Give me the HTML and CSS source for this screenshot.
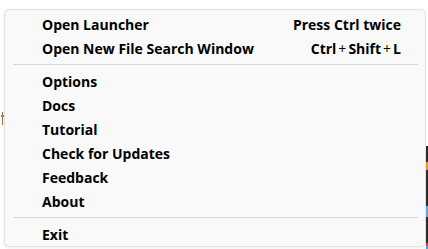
FILE: index.html
```html
<!DOCTYPE html>
<html lang="en">
<head>
<meta charset="UTF-8">
<meta name="viewport" content="width=device-width, initial-scale=1.0">
<title>Tray Menu</title>
<link rel="stylesheet" href="styles.css">
</head>
<body>
<div class="desk-left"><span class="glyph"></span></div>
<div class="menu">
    <div class="item"><span>Open Launcher</span><span class="keys">Press Ctrl twice</span></div>
    <div class="item"><span>Open New File Search Window</span><span class="keys">Ctrl<span class="plus">+</span>Shift<span class="plus">+</span>L</span></div>
    <div class="sep"></div>
    <div class="item">Options</div>
    <div class="item">Docs</div>
    <div class="item">Tutorial</div>
    <div class="item">Check for Updates</div>
    <div class="item">Feedback</div>
    <div class="item">About</div>
    <div class="sep"></div>
    <div class="item">Exit</div>
</div>
<div class="desk-right"></div>
</body>
</html>
```

FILE: styles.css
```css
html, body {
    margin: 0;
    height: 249px;
    background: #fff;
    overflow: hidden;
}

body {
    display: flex;
    align-items: flex-start;
    font-family: "Open Sans", "Noto Sans", sans-serif;
}

.desk-left {
    width: 4px;
    height: 249px;
    flex: none;
    padding-top: 112px;
    box-sizing: border-box;
}

.glyph {
    display: block;
    width: 3px;
    height: 13px;
    margin-left: 1px;
    background: linear-gradient(to bottom, transparent 0 3px, #b0805a 3px 5px, transparent 5px) , linear-gradient(to right, transparent 0 1px, #a06a40 1px 2px, transparent 2px);
}

.menu {
    width: 422px;
    height: 238px;
    margin-top: 9px;
    flex: none;
    box-sizing: border-box;
    background: #f9f9f9;
    border: 1px solid #e2e2e2;
    border-radius: 5px;
    box-shadow: 0 1px 3px rgba(0, 0, 0, 0.08);
    padding-top: 2px;
}

.item {
    height: 24px;
    display: flex;
    align-items: center;
    justify-content: space-between;
    padding: 0 24px 0 37px;
    font-size: 14px;
    font-weight: 700;
    color: #000;
}

.keys {
    text-align: right;
}

.plus {
    margin: 0 2px;
    font-weight: 400;
}

.sep {
    height: 1px;
    background: #d6d6d6;
    margin: 4px 7px 4px 8px;
}

.desk-right {
    width: 2px;
    height: 249px;
    flex: none;
    background: linear-gradient(to bottom, #fff 0 146px, #2b2b2b 146px 162px, #e0a020 162px 170px, #2b2b2b 170px 206px, #6aa8e0 206px 217px, #2b2b2b 217px 243px, #d04040 243px 246px, #5a9ad8 246px);
}
```
